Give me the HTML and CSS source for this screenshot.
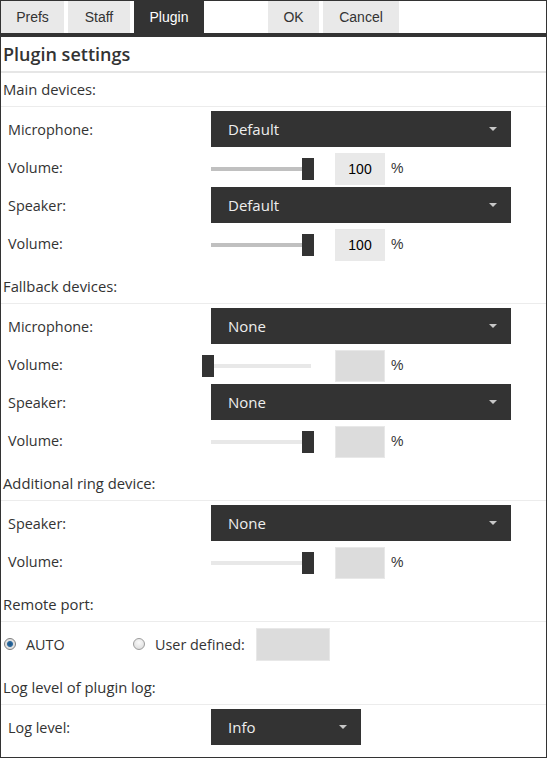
FILE: index.html
```html
<!DOCTYPE html>
<html>
<head>
<meta charset="utf-8">
<link rel="stylesheet" href="styles.css">
</head>
<body>
<div class="app">
  <div class="tabs">
    <div class="tab w-prefs">Prefs</div>
    <div class="tab w-staff">Staff</div>
    <div class="tab w-plugin active">Plugin</div>
    <div class="tab-spacer"></div>
    <div class="tab w-ok">OK</div>
    <div class="tab w-cancel">Cancel</div>
  </div>

  <div class="title">Plugin settings</div>

  <div class="section-head">Main devices:</div>
  <div class="section-body">
    <div class="row select-row">
      <div class="label">Microphone:</div>
      <div class="select"><span>Default</span><i class="caret"></i></div>
    </div>
    <div class="row vol-row">
      <div class="label">Volume:</div>
      <div class="volume">
        <div class="slider"><div class="track"><div class="thumb" style="left: calc(100% - 9px)"></div></div></div>
        <div class="num">100</div>
        <span class="pct">%</span>
      </div>
    </div>
    <div class="row select-row">
      <div class="label">Speaker:</div>
      <div class="select"><span>Default</span><i class="caret"></i></div>
    </div>
    <div class="row vol-row">
      <div class="label">Volume:</div>
      <div class="volume">
        <div class="slider"><div class="track"><div class="thumb" style="left: calc(100% - 9px)"></div></div></div>
        <div class="num">100</div>
        <span class="pct">%</span>
      </div>
    </div>
  </div>

  <div class="section-head">Fallback devices:</div>
  <div class="section-body">
    <div class="row select-row">
      <div class="label">Microphone:</div>
      <div class="select"><span>None</span><i class="caret"></i></div>
    </div>
    <div class="row vol-row">
      <div class="label">Volume:</div>
      <div class="volume">
        <div class="slider"><div class="track disabled"><div class="thumb" style="left: calc(0% - 9px)"></div></div></div>
        <div class="num disabled"></div>
        <span class="pct">%</span>
      </div>
    </div>
    <div class="row select-row">
      <div class="label">Speaker:</div>
      <div class="select"><span>None</span><i class="caret"></i></div>
    </div>
    <div class="row vol-row">
      <div class="label">Volume:</div>
      <div class="volume">
        <div class="slider"><div class="track disabled"><div class="thumb" style="left: calc(100% - 9px)"></div></div></div>
        <div class="num disabled"></div>
        <span class="pct">%</span>
      </div>
    </div>
  </div>

  <div class="section-head">Additional ring device:</div>
  <div class="section-body">
    <div class="row select-row">
      <div class="label">Speaker:</div>
      <div class="select"><span>None</span><i class="caret"></i></div>
    </div>
    <div class="row vol-row">
      <div class="label">Volume:</div>
      <div class="volume">
        <div class="slider"><div class="track disabled"><div class="thumb" style="left: calc(100% - 9px)"></div></div></div>
        <div class="num disabled"></div>
        <span class="pct">%</span>
      </div>
    </div>
  </div>

  <div class="section-head">Remote port:</div>
  <div class="section-body">
    <div class="radio-row">
      <label class="radio-opt first"><span class="radio checked"></span><span class="radio-text">AUTO</span></label>
      <label class="radio-opt"><span class="radio"></span><span class="radio-text">User defined:</span></label>
      <div class="port disabled"></div>
    </div>
  </div>

  <div class="section-head">Log level of plugin log:</div>
  <div class="section-body">
    <div class="row select-row">
      <div class="label">Log level:</div>
      <div class="select small"><span>Info</span><i class="caret"></i></div>
    </div>
  </div>
</div>
</body>
</html>
```

FILE: styles.css
```css
* { box-sizing: border-box; }

html, body {
  margin: 0;
  padding: 0;
  background: #fff;
}

.app {
  height: 758px;
  border: 1px solid #333;
  font-family: "Open Sans", "DejaVu Sans", sans-serif;
  color: #333;
  overflow: hidden;
}

/* Tabs */
.tabs {
  display: flex;
  gap: 4px;
  height: 36px;
  border-bottom: 4px solid #333;
}

.tab {
  height: 32px;
  line-height: 32px;
  text-align: center;
  background: #e9e9e9;
  font-family: "Liberation Sans", Arial, sans-serif;
  font-size: 14px;
  color: #333;
}

.tab.active {
  background: #333;
  color: #fff;
}

.w-prefs { width: 63px; }
.w-staff { width: 62px; }
.w-plugin { width: 70px; }
.w-ok { width: 51px; }
.w-cancel { width: 76px; }
.tab-spacer { width: 56px; }

/* Title */
.title {
  height: 36px;
  line-height: 34px;
  padding-left: 2px;
  border-bottom: 2px solid #e6e6e6;
  font-size: 18px;
  font-weight: 600;
  color: #333;
}

.section-head {
  height: 34px;
  line-height: 33px;
  padding-left: 2px;
  border-bottom: 1px solid #ececec;
  font-size: 14.8px;
}

.section-body {
  padding: 4px 0 7px;
}

.row {
  display: grid;
  grid-template-columns: 210px auto;
}

.label {
  padding-left: 7px;
  font-size: 14.4px;
}

.select-row {
  height: 36px;
  align-items: center;
}

.vol-row {
  height: 40px;
  padding-top: 6px;
  align-items: start;
}

.vol-row .label {
  line-height: 30px;
}

/* Select */
.select {
  width: 300px;
  height: 36px;
  background: #333;
  color: #eee;
  font-size: 15px;
  display: flex;
  align-items: center;
  justify-content: space-between;
  padding: 0 14px 0 17px;
}

.select.small { width: 150px; }

.caret {
  width: 0;
  height: 0;
  border-left: 4px solid transparent;
  border-right: 4px solid transparent;
  border-top: 4px solid #c8c8c8;
}

/* Volume */
.volume {
  display: flex;
  align-items: center;
  height: 32px;
}

.slider {
  width: 124px;
  height: 32px;
  display: flex;
  align-items: center;
}

.track {
  position: relative;
  width: 100px;
  height: 4px;
  background: #c0c0c0;
}

.track.disabled { background: #e8e8e8; }

.thumb {
  position: absolute;
  top: -9px;
  width: 12px;
  height: 22px;
  background: #333;
}

.num {
  width: 50px;
  height: 32px;
  line-height: 32px;
  text-align: center;
  background: #e9e9e9;
  font-family: "Liberation Sans", Arial, sans-serif;
  font-size: 14px;
  color: #000;
}

.num.disabled, .port.disabled {
  background: #dcdcdc;
  border: 1px solid #e8e8e8;
}

.pct {
  margin-left: 6px;
  font-family: "Liberation Sans", Arial, sans-serif;
  font-size: 14px;
  color: #333;
  margin-top: -2px;
}

/* Radios */
.radio-row {
  height: 38px;
  padding-top: 2px;
  padding-left: 3px;
  display: flex;
  align-items: flex-start;
}

.radio-opt {
  display: flex;
  align-items: center;
  height: 32px;
  font-size: 14.4px;
}

.radio-opt.first { width: 129px; }

.radio {
  width: 12px;
  height: 12px;
  border-radius: 50%;
  border: 1px solid #9c9c9c;
  background: radial-gradient(circle at 50% 35%, #fafafa 0%, #e2e2e2 70%, #d0d0d0 100%);
  margin-right: 10px;
  display: inline-block;
}

.radio.checked {
  background: radial-gradient(circle, #1e4f7c 0, #2a6aa0 2.5px, #dcdcdc 3.5px, #f4f4f4 100%);
  border-color: #7d7d7d;
}

.port {
  width: 74px;
  height: 33px;
  margin-left: 11px;
}
```
